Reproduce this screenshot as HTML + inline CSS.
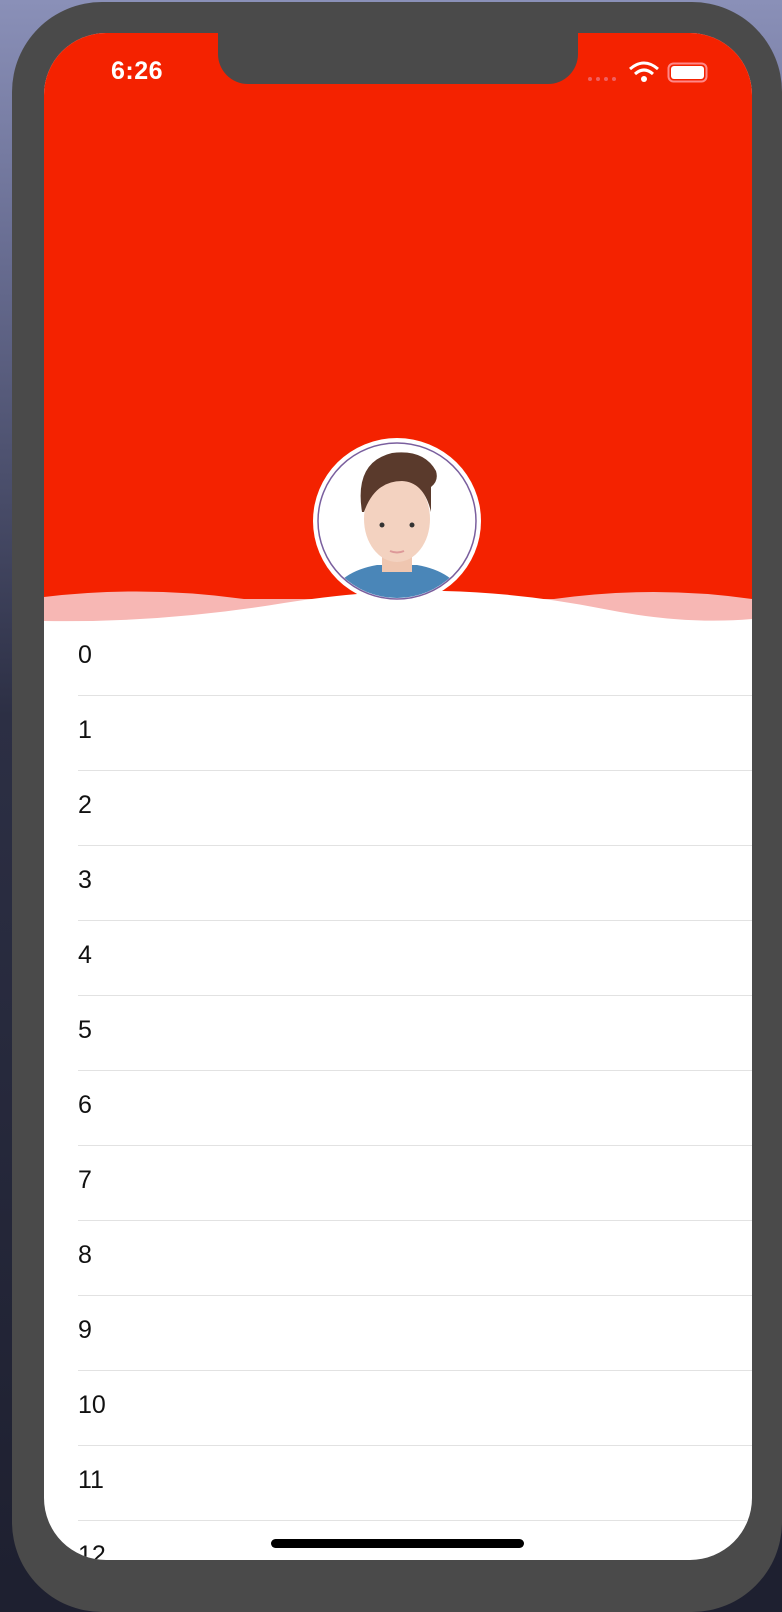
<!DOCTYPE html>
<html style="background:#1e2030"><head><meta charset="utf-8"><style>
*{margin:0;padding:0;box-sizing:border-box}
body{width:782px;height:1590px;overflow:hidden;background:linear-gradient(#8a90b8 0%,#6a6f94 15%,#2c2f44 45%,#1e2030 100%);font-family:"Liberation Sans",sans-serif;position:relative}
.phone{position:absolute;left:12px;top:2px;width:770px;height:1610px;background:#4a4a4a;border-radius:90px}
.screen{position:absolute;left:44px;top:33px;width:708px;height:1527px;background:#fff;border-radius:62px;overflow:hidden}
.red{position:absolute;left:0;top:0;width:708px;height:590px;background:#f42200}
.notch{position:absolute;left:174px;top:-2px;width:360px;height:53px;background:#4a4a4a;border-radius:0 0 30px 30px}
.time{position:absolute;left:67px;top:24px;color:#fff;font-size:25px;font-weight:bold;letter-spacing:0.5px}
.row{position:absolute;left:34px;width:674px;height:75px;border-bottom:1px solid #e2e2e2}
.row span{position:absolute;left:0;top:20px;font-size:25px;color:#111}
.home{position:absolute;left:227px;top:1506px;width:253px;height:9px;background:#000;border-radius:5px}
</style></head><body>
<div class="phone"></div>
<div class="screen">
<div class="red"></div>
<svg style="position:absolute;left:0;top:0" width="708" height="620">
<path d="M0 564 Q100 552 200 566 L510 566 Q610 552 708 566 L708 620 L0 620Z" fill="#f7b7b4"/>
<path d="M0 588 Q120 590 240 570 Q330 556 400 558 Q480 560 560 576 Q640 592 708 586 L708 620 L0 620Z" fill="#fff"/>
</svg>
<div class="notch"></div>
<div class="time">6:26</div>
<svg style="position:absolute;left:536px;top:26px" width="130" height="26">
<g fill="#f06060"><circle cx="10" cy="20" r="2"/><circle cx="18" cy="20" r="2"/><circle cx="26" cy="20" r="2"/><circle cx="34" cy="20" r="2"/></g>
<path d="M50 10 Q64 -2 78 10" stroke="#fff" stroke-width="3" fill="none"/>
<path d="M55 15 Q64 7 73 15" stroke="#fff" stroke-width="3" fill="none"/>
<circle cx="64" cy="20" r="3" fill="#fff"/>
<rect x="88.5" y="4.5" width="38" height="18" rx="5" fill="none" stroke="#f88" stroke-width="2"/>
<rect x="91" y="7" width="33" height="13" rx="3" fill="#fff"/>
</svg>
<svg style="position:absolute;left:268px;top:404px" width="170" height="168">
<ellipse cx="85" cy="84" rx="84" ry="83" fill="#fff"/>
<ellipse cx="85" cy="84" rx="79" ry="78" fill="#fff" stroke="#7a5f9e" stroke-width="1.5"/>
<clipPath id="c"><ellipse cx="85" cy="84" rx="78" ry="77"/></clipPath>
<g clip-path="url(#c)">
<path d="M15 165 Q25 135 65 128 L105 128 Q145 135 155 165 Z" fill="#4a86b8"/>
<rect x="70" y="100" width="30" height="35" fill="#efc6b0"/>
<ellipse cx="85" cy="82" rx="33" ry="43" fill="#f3d2c0"/>
<path d="M50 75 Q42 25 80 16 Q112 12 124 34 Q127 44 119 50 L119 75 Q112 45 90 44 Q63 44 52 75Z" fill="#5a3a2c"/>
<circle cx="70" cy="88" r="2.5" fill="#333"/><circle cx="100" cy="88" r="2.5" fill="#333"/>
<path d="M78 114 Q85 117 92 114" stroke="#d99" stroke-width="2" fill="none"/>
</g>
</svg>
<div class="row" style="top:588px"><span>0</span></div>
<div class="row" style="top:663px"><span>1</span></div>
<div class="row" style="top:738px"><span>2</span></div>
<div class="row" style="top:813px"><span>3</span></div>
<div class="row" style="top:888px"><span>4</span></div>
<div class="row" style="top:963px"><span>5</span></div>
<div class="row" style="top:1038px"><span>6</span></div>
<div class="row" style="top:1113px"><span>7</span></div>
<div class="row" style="top:1188px"><span>8</span></div>
<div class="row" style="top:1263px"><span>9</span></div>
<div class="row" style="top:1338px"><span>10</span></div>
<div class="row" style="top:1413px"><span>11</span></div>
<div class="row" style="top:1488px"><span>12</span></div>
<div class="home"></div>
</div>
</body></html>
